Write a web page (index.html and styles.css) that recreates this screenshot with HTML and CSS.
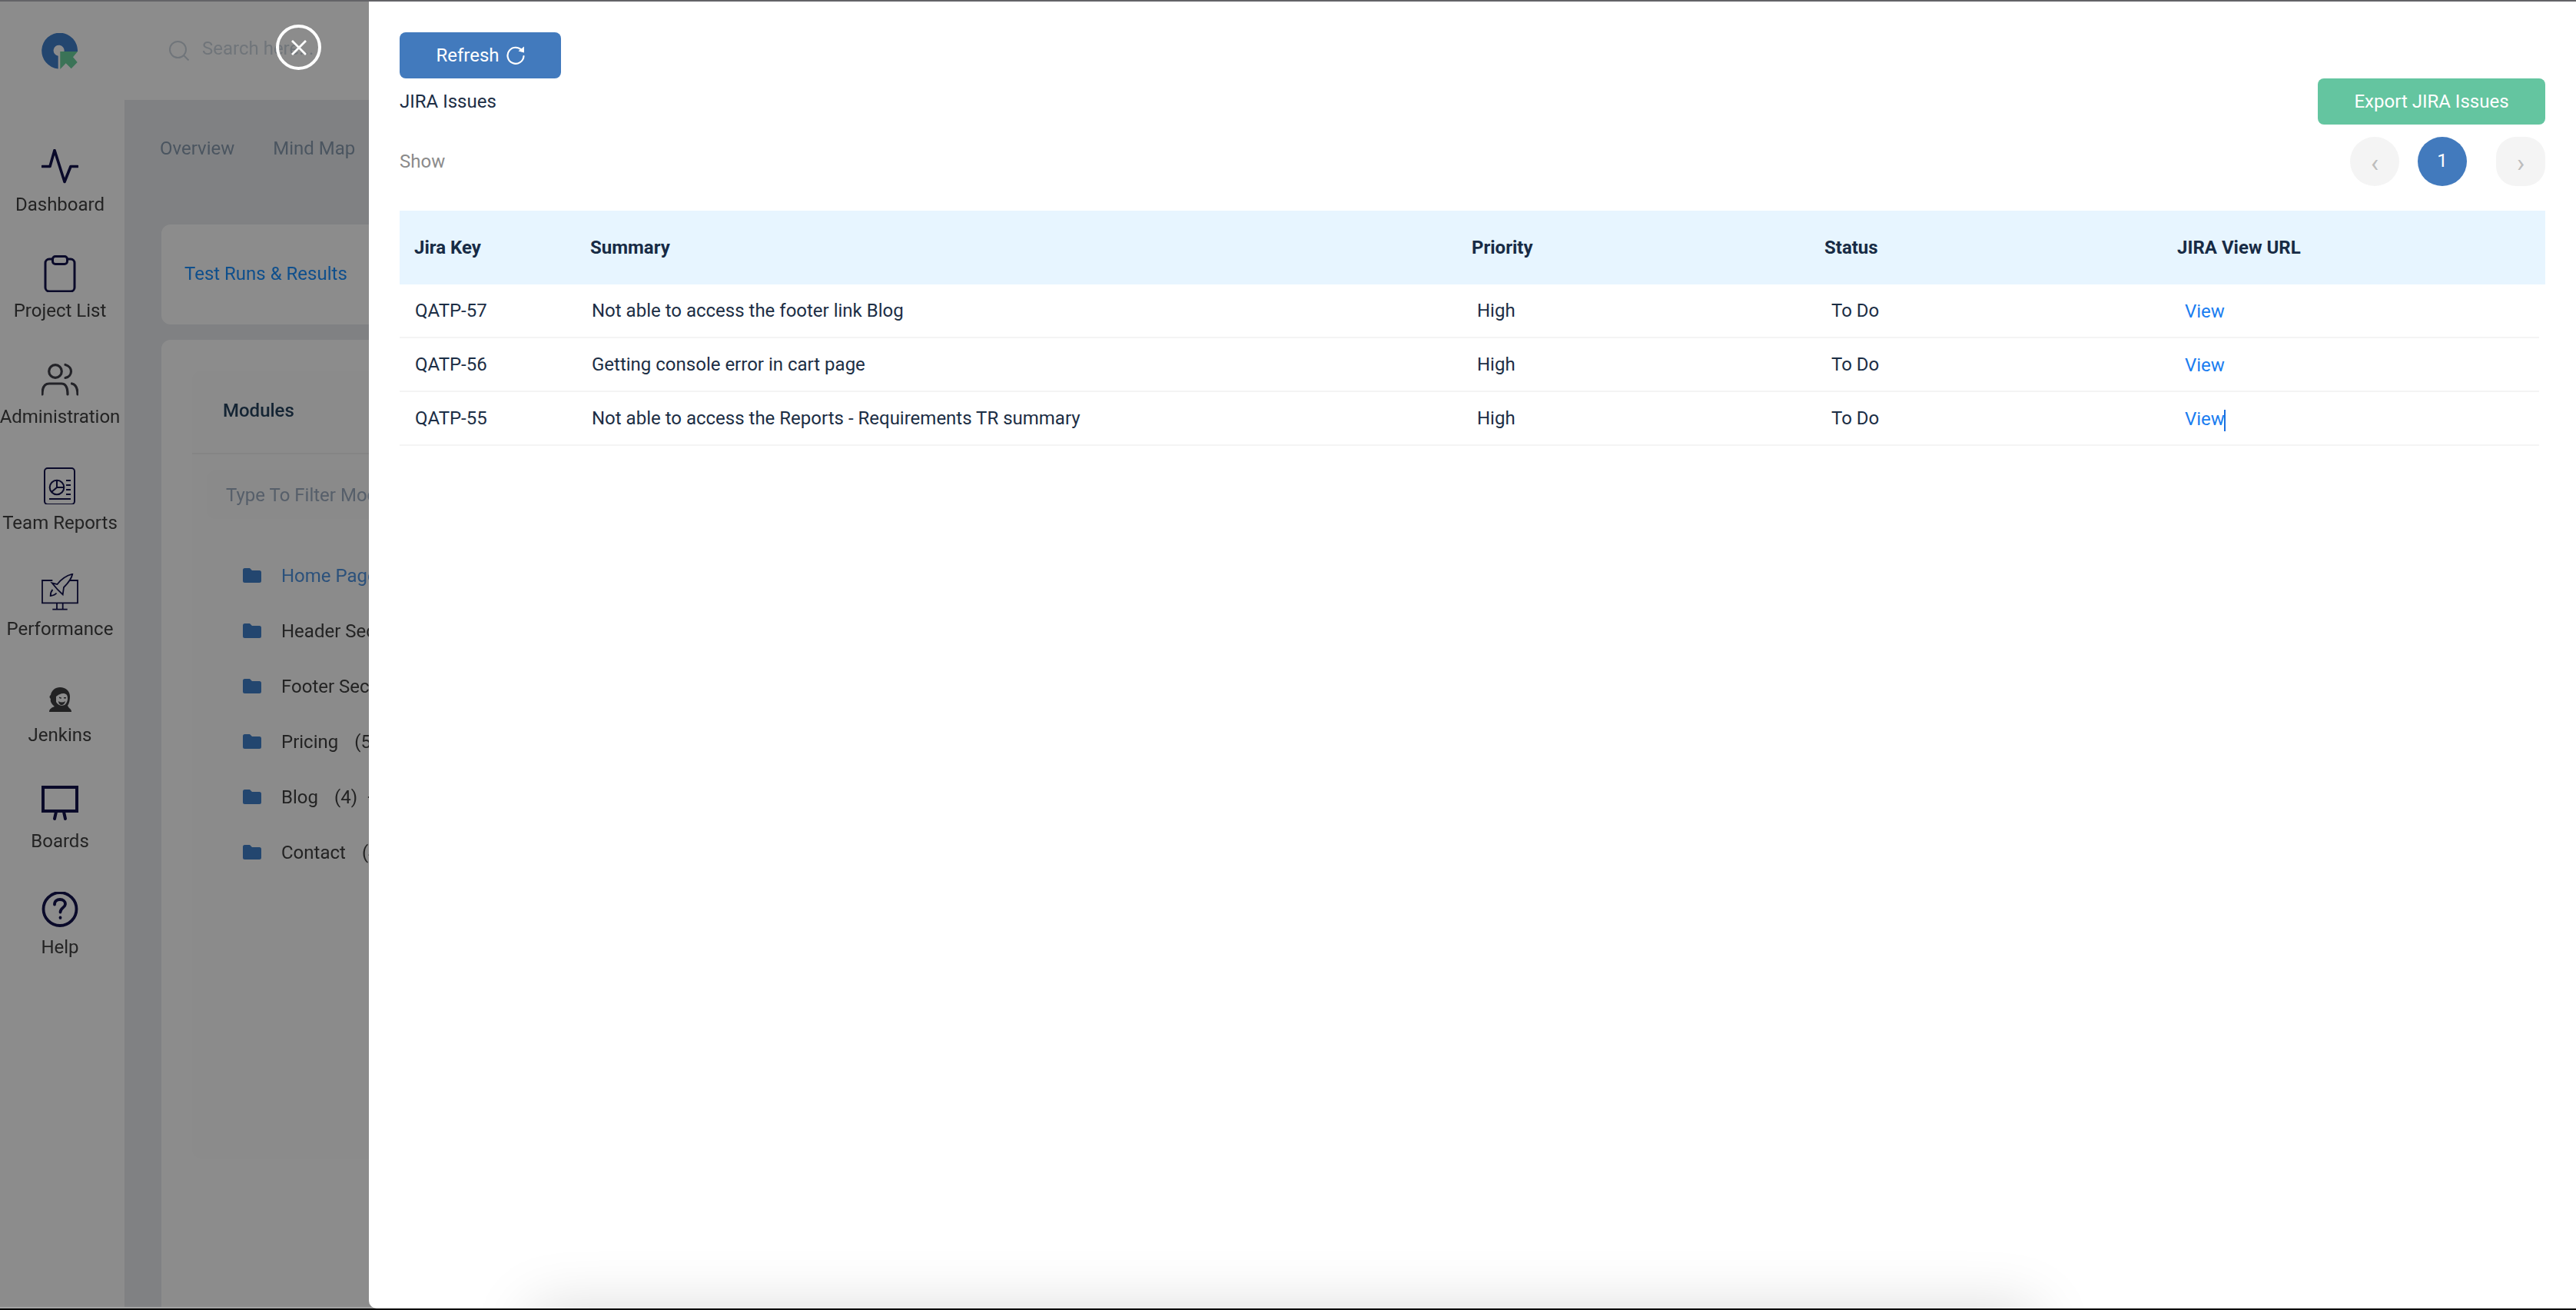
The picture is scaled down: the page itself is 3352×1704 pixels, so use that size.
FILE: index.html
```html
<!DOCTYPE html>
<html lang="en">
<head>
<meta charset="utf-8">
<title>JIRA Issues</title>
<link rel="stylesheet" href="styles.css">
</head>
<body>
<div class="strip-top"></div>
<div class="window">
  <div class="app">
    <header class="topbar">
      <div class="logo-box">
        <svg class="logo" viewBox="0 0 47 47" width="47" height="47">
          <path fill="#407fca" d="M21.7 46.4A23.4 23.4 0 1 1 47 24L29.5 24A7 7 0 1 0 21.7 29.7Z"/>
          <path fill="#6bd19e" d="M24.3 24L47 24L41 31.3L46.7 38L38.7 46.3L31.7 39.3L24.3 47Z"/>
        </svg>
      </div>
      <div class="search">
        <svg class="search-icon" viewBox="0 0 26 26" width="26" height="26" fill="none" stroke="#ccd5de" stroke-width="2">
          <circle cx="11.5" cy="11.5" r="10.5"/><path d="M19 19L25.5 25.5"/>
        </svg>
        <span class="search-text">Search here...</span>
      </div>
    </header>
    <div class="body-row">
      <nav class="sidebar">
        <a class="nav-item">
          <svg class="nav-icon" viewBox="0 0 48 48" fill="none" stroke="#12124c" stroke-width="3.6" stroke-linecap="round" stroke-linejoin="round"><path d="M1 22.500H11L17 1.500L30 42.500L38 22.500H47"/></svg>
          <span>Dashboard</span>
        </a>
        <a class="nav-item">
          <svg class="nav-icon" viewBox="0 0 48 48" fill="none" stroke="#12124c" stroke-width="3"><rect x="5" y="5" width="38" height="42" rx="5"/><rect x="14.500" y="1.500" width="19" height="10" rx="3.500" fill="#fff"/></svg>
          <span>Project List</span>
        </a>
        <a class="nav-item">
          <svg class="nav-icon" viewBox="0 0 48 48" fill="none" stroke="#404048" stroke-width="3.200" stroke-linecap="round"><circle cx="18" cy="13" r="8.300"/><path d="M31 4.500C36.500 6 38.500 10 38.500 13C38.500 16.500 36 20.500 31 21.500"/><path d="M1 43C1 33 4 29 10 29H26C31 29 34 33 34 43"/><path d="M39.500 29C44 30 47 34 47 43"/></svg>
          <span>Administration</span>
        </a>
        <a class="nav-item">
          <svg class="nav-icon" viewBox="0 0 48 48" fill="none" stroke="#12124c" stroke-width="2"><rect x="4" y="1" width="39" height="47" rx="4"/><circle cx="20" cy="26" r="9.300"/><path d="M20 17V26L13 32M20 26H29"/><path d="M32 17H38M32 23H38M32 29H38M32 35H38M10 41H38"/></svg>
          <span>Team Reports</span>
        </a>
        <a class="nav-item">
          <svg class="nav-icon" viewBox="0 0 48 48" fill="none" stroke="#12124c" stroke-width="1.800"><path d="M14.300 9H1V38.300H47V9H36"/><path d="M20 38.300V46.700M27.700 38.300V46.700M14.300 46.700H33.700"/><path d="M40.300 .7C33 2.500 26 7 20.500 14L13.700 12.300L21 21L27.700 27.300L29 18C35 12 39 7 40.300 .7Z"/><path d="M14.500 21C12.500 23 11.700 26 11.700 29C15 28.500 18 27.500 19.500 25.500"/></svg>
          <span>Performance</span>
        </a>
        <a class="nav-item">
          <svg class="nav-icon" viewBox="0 0 48 48"><path fill="#3e3e40" d="M10 42C10 38 14 36 17 35C13 32 11 28 12 25C10 24 10 21 12 20C13 14 18 10 24 10C32 10 37 15 37 22C37 27 36 31 34 34L36 37C38 38 39 40 39 42Z"/><path fill="#fff" d="M19 22C23 19 29 16 33 20C35 24 34 30 30 33C26 35 21 33 19 29Z"/><path fill="#3e3e40" d="M22 28C25 30 28 30 31 28C30 32 28 33 26 33C24 33 22 31 22 28ZM23 22.500L26 23.500L25.500 25L23 24ZM29 23H32V24.500H29Z"/></svg>
          <span>Jenkins</span>
        </a>
        <a class="nav-item">
          <svg class="nav-icon" viewBox="0 0 48 48" fill="none" stroke="#12124c" stroke-width="4" stroke-linecap="round"><rect x="2" y="2" width="44" height="31"/><path d="M17 43L19 34M31 43L29 34"/></svg>
          <span>Boards</span>
        </a>
        <a class="nav-item">
          <svg class="nav-icon" viewBox="0 0 48 48" fill="none" stroke="#12124c" stroke-width="3.800" stroke-linecap="round"><circle cx="24" cy="22.500" r="21.500"/><path d="M17 16.500C17 12 20.500 10 24 10C28 10 31 12.500 31 16C31 20.500 24.500 21 24.500 26.500"/><path d="M24.500 33.500V33.900"/></svg>
          <span>Help</span>
        </a>
      </nav>
      <main class="main">
        <div class="tabs">
          <span>Overview</span>
          <span>Mind Map</span>
        </div>
        <section class="card card-runs"><a class="runs-link">Test Runs &amp; Results</a></section>
        <section class="card card-modules">
          <div class="panel">
            <h2 class="panel-head">Modules</h2>
            <div class="filter">Type To Filter Modules</div>
            <ul class="tree">
              <li class="tree-row tree-active"><svg class="folder" viewBox="0 0 24 19"><path d="M0 2.500A2.500 2.500 0 0 1 2.500 0H9L12 3H21.500A2.500 2.500 0 0 1 24 5.500V16.500A2.500 2.500 0 0 1 21.500 19H2.500A2.500 2.500 0 0 1 0 16.500Z"/></svg><span>Home Page</span><span class="count">(6)</span></li>
              <li class="tree-row"><svg class="folder" viewBox="0 0 24 19"><path d="M0 2.500A2.500 2.500 0 0 1 2.500 0H9L12 3H21.500A2.500 2.500 0 0 1 24 5.500V16.500A2.500 2.500 0 0 1 21.500 19H2.500A2.500 2.500 0 0 1 0 16.500Z"/></svg><span>Header Section</span><span class="count">(5)</span></li>
              <li class="tree-row"><svg class="folder" viewBox="0 0 24 19"><path d="M0 2.500A2.500 2.500 0 0 1 2.500 0H9L12 3H21.500A2.500 2.500 0 0 1 24 5.500V16.500A2.500 2.500 0 0 1 21.500 19H2.500A2.500 2.500 0 0 1 0 16.500Z"/></svg><span>Footer Section</span><span class="count">(5)</span></li>
              <li class="tree-row"><svg class="folder" viewBox="0 0 24 19"><path d="M0 2.500A2.500 2.500 0 0 1 2.500 0H9L12 3H21.500A2.500 2.500 0 0 1 24 5.500V16.500A2.500 2.500 0 0 1 21.500 19H2.500A2.500 2.500 0 0 1 0 16.500Z"/></svg><span>Pricing</span><span class="count">(5)</span></li>
              <li class="tree-row"><svg class="folder" viewBox="0 0 24 19"><path d="M0 2.500A2.500 2.500 0 0 1 2.500 0H9L12 3H21.500A2.500 2.500 0 0 1 24 5.500V16.500A2.500 2.500 0 0 1 21.500 19H2.500A2.500 2.500 0 0 1 0 16.500Z"/></svg><span>Blog</span><span class="count">(4)</span><span class="count-add">+</span></li>
              <li class="tree-row"><svg class="folder" viewBox="0 0 24 19"><path d="M0 2.500A2.500 2.500 0 0 1 2.500 0H9L12 3H21.500A2.500 2.500 0 0 1 24 5.500V16.500A2.500 2.500 0 0 1 21.500 19H2.500A2.500 2.500 0 0 1 0 16.500Z"/></svg><span>Contact</span><span class="count">(4)</span></li>
            </ul>
          </div>
        </section>
      </main>
    </div>
  </div>
  <button class="close" aria-label="Close">
    <svg viewBox="0 0 20 20" width="20" height="20" fill="none" stroke="#fff" stroke-width="2.800"><path d="M1 1L19 19M19 1L1 19"/></svg>
  </button>
  <aside class="drawer">
    <button class="btn btn-refresh">Refresh
      <svg class="refresh-icon" viewBox="0 0 24 24" width="24" height="24" fill="none" stroke="#fff" stroke-width="2.200" stroke-linecap="round"><path d="M20.800 6.500A10.500 10.500 0 1 0 22.500 13"/><path fill="#fff" stroke="none" d="M15.500 6.500L23 8.500L23 0.500Z"/></svg>
    </button>
    <div class="toolbar">
      <span class="issues-title">JIRA Issues</span>
      <button class="btn btn-export">Export JIRA Issues</button>
    </div>
    <div class="pager-row">
      <span class="show">Show</span>
      <div class="pager">
        <span class="page page-nav">‹</span>
        <span class="page page-current">1</span>
        <span class="page page-nav page-next">›</span>
      </div>
    </div>
    <table class="issues">
      <colgroup>
        <col class="col-key"><col class="col-summary"><col class="col-priority"><col class="col-status"><col class="col-url">
      </colgroup>
      <thead>
        <tr><th>Jira Key</th><th>Summary</th><th>Priority</th><th>Status</th><th>JIRA View URL</th></tr>
      </thead>
      <tbody>
        <tr><td>QATP-57</td><td class="td-summary">Not able to access the footer link Blog</td><td class="td-priority">High</td><td class="td-status">To Do</td><td class="td-url"><a class="view">View</a></td></tr>
        <tr><td>QATP-56</td><td class="td-summary">Getting console error in cart page</td><td class="td-priority">High</td><td class="td-status">To Do</td><td class="td-url"><a class="view">View</a></td></tr>
        <tr><td>QATP-55</td><td class="td-summary">Not able to access the Reports - Requirements TR summary</td><td class="td-priority">High</td><td class="td-status">To Do</td><td class="td-url"><a class="view">View</a><span class="caret"></span></td></tr>
      </tbody>
    </table>
    <div class="sheet-shadow"></div>
  </aside>
</div>
<div class="strip-bottom"></div>
</body>
</html>
```
FILE: styles.css
```css
* { box-sizing: border-box; }
html, body { margin: 0; height: 1704px; overflow: hidden; background: #000; }
body { font-family: Roboto, "Liberation Sans", sans-serif; font-size: 24px; line-height: 32px; color: #404040; }
.strip-top { height: 2px; background: #636367; }
.strip-bottom { height: 2px; background: #a4a4a4; }
.window { position: relative; height: 1698px; }
.app { height: 100%; display: flex; flex-direction: column; background: #fff; overflow: hidden; filter: brightness(0.55); }

.topbar { height: 128px; flex: none; display: flex; align-items: center; }
.logo-box { width: 162px; flex: none; display: flex; padding-left: 54px; }
.search { display: flex; align-items: center; gap: 17px; margin-left: 58px; }
.search-text { color: #ccd5de; position: relative; top: -3px; }

.body-row { flex: 1; display: flex; min-height: 0; }
.sidebar { width: 162px; flex: none; display: flex; flex-direction: column; align-items: center; gap: 50px; padding: 64px 6px 0 0; }
.nav-item { display: flex; flex-direction: column; align-items: center; gap: 7px; height: 88px; white-space: nowrap; }
.nav-icon { width: 48px; height: 48px; flex: none; display: block; }
.nav-item span { line-height: 34px; }

.main { flex: 1; background: #e9ebee; padding: 47px 0 0 46px; min-width: 0; }
.tabs { display: flex; gap: 50px; color: #889baf; height: 32px; }
.card { background: #fff; border-radius: 12px 0 0 12px; margin-left: 2px; }
.card-runs { margin-top: 83px; height: 130px; display: flex; align-items: center; padding: 0 0 2px 30px; }
.runs-link { color: #1b8fff; }
.card-modules { margin-top: 20px; padding: 40px 0 0 40px; height: 1300px; }
.panel { height: 1025px; background: #fcfcfc; border-radius: 12px 0 0 12px; }
.panel-head { margin: 0; height: 109px; display: flex; align-items: center; padding: 0 0 3px 40px; font-size: 24px; font-weight: 500; color: #26435f; border-bottom: 2px solid #f2f2f2; }
.filter { margin: 21px 0 0 20px; height: 63px; padding-left: 24px; display: flex; align-items: center; background: #fafafa; border-radius: 10px; color: #9dacc0; white-space: nowrap; }
.tree { list-style: none; margin: 38px 0 0; padding: 0 0 0 66px; }
.tree-row { height: 72px; display: flex; align-items: center; white-space: nowrap; }
.folder { width: 24px; height: 19px; flex: none; fill: #407fca; margin-right: 26px; position: relative; top: -1px; }
.count { margin-left: 21px; }
.count-add { margin-left: 13px; }
.tree-active { color: #4f93e0; }
.tree-active .count { color: #404040; }

.close { position: absolute; left: 359px; top: 30px; width: 59px; height: 59px; padding: 0; border: 4.5px solid #fff; border-radius: 50%; background: transparent; display: flex; align-items: center; justify-content: center; }

.drawer { position: absolute; left: 480px; right: 0; top: 0; bottom: -2px; background: #fff; border-radius: 0 0 0 10px; padding: 40px; overflow: hidden; color: #1c2e45; }
.btn { font: inherit; color: #fff; border: 0; border-radius: 8px; display: flex; align-items: center; justify-content: center; height: 60px; padding: 0; }
.btn-refresh { width: 210px; background: #427abd; gap: 9px; }
.refresh-icon { display: block; }
.toolbar { display: flex; justify-content: space-between; align-items: center; height: 60px; }
.btn-export { width: 296px; background: #64c5a0; }
.pager-row { display: flex; justify-content: space-between; align-items: center; margin-top: 16px; height: 64px; }
.show { color: #8b8b8b; }
.pager { display: flex; gap: 24px; }
.page { width: 64px; height: 64px; border-radius: 50%; display: flex; align-items: center; justify-content: center; }
.page-nav { background: #f4f4f4; color: #bdbdbd; font-size: 34px; padding-top: 4px; }
.page-next { margin-left: 14px; border-radius: 26px; }
.page-current { background: #427abd; color: #fff; padding-bottom: 2px; }

.issues { width: 2792px; margin-top: 32px; border-collapse: separate; border-spacing: 0; table-layout: fixed; }
.col-key { width: 229px; }
.col-summary { width: 1147px; }
.col-priority { width: 459px; }
.col-status { width: 459px; }
.col-url { width: 498px; }
.issues th { height: 96px; padding: 0 0 0 19px; background: #e7f5ff; text-align: left; font-weight: 700; color: #172b45; }
.issues td { height: 70px; padding: 0 0 0 20px; border-bottom: 2px solid #f4f4f4; }
.issues .td-summary { padding-left: 21px; }
.issues .td-priority { padding-left: 26px; }
.issues .td-status { padding-left: 28px; }
.issues .td-url { padding-left: 29px; border-bottom: 0; background: linear-gradient(#f4f4f4, #f4f4f4) left bottom / calc(100% - 8px) 2px no-repeat; }
.view { color: #1a7df0; }
.caret { display: inline-block; width: 2px; height: 28px; background: #1a6fe0; vertical-align: middle; margin-left: -1px; }
.sheet-shadow { position: absolute; left: 212px; width: 1956px; top: 1700px; height: 80px; box-shadow: 0 0 80px rgba(0, 0, 0, 0.15); }
```
